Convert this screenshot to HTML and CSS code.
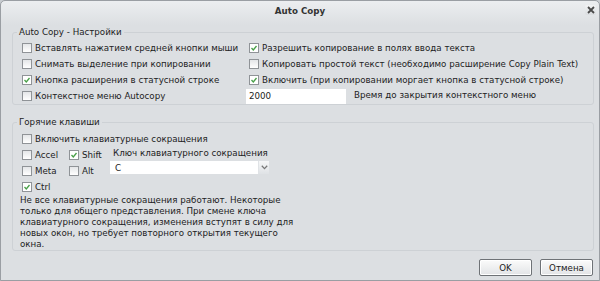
FILE: index.html
```html
<!DOCTYPE html>
<html lang="ru">
<head>
    <meta charset="UTF-8">
    <title>Auto Copy</title>
    <link rel="stylesheet" href="styles.css">
</head>
<body>
    <div class="dialog">
        <div class="titlebar">
            <span class="title">Auto Copy</span>
            <span class="close">
                <svg width="8" height="8" viewBox="0 0 8 8"><path d="M1 1L7 7M7 1L1 7" stroke="#4a4a4a" stroke-width="1.8"/></svg>
            </span>
        </div>

        <div class="group first">
            <div class="legend">Auto Copy - Настройки</div>
            <div class="settings">
                <label class="row"><span class="cb"></span>Вставлять нажатием средней кнопки мыши</label>
                <label class="row"><span class="cb checked"></span>Разрешить копирование в полях ввода текста</label>
                <label class="row"><span class="cb"></span>Снимать выделение при копировании</label>
                <label class="row"><span class="cb"></span>Копировать простой текст (необходимо расширение Copy Plain Text)</label>
                <label class="row"><span class="cb checked"></span>Кнопка расширения в статусной строке</label>
                <label class="row"><span class="cb checked"></span>Включить (при копировании моргает кнопка в статусной строке)</label>
                <label class="row"><span class="cb"></span>Контекстное меню Autocopy</label>
                <div class="row timeout">
                    <span class="input">2000</span>
                    <span class="hint">Время до закрытия контекстного меню</span>
                </div>
            </div>
        </div>

        <div class="group second">
            <div class="legend">Горячие клавиши</div>
            <div class="inner">
                <label class="row"><span class="cb"></span>Включить клавиатурные сокращения</label>
                <div class="keys">
                    <div class="mods">
                        <label class="row"><span class="cb"></span>Accel</label>
                        <label class="row"><span class="cb checked"></span>Shift</label>
                        <label class="row"><span class="cb"></span>Meta</label>
                        <label class="row"><span class="cb"></span>Alt</label>
                        <label class="row"><span class="cb checked"></span>Ctrl</label>
                    </div>
                    <div class="keybox">
                        <div class="keylabel">Ключ клавиатурного сокращения</div>
                        <div class="select">
                            <span>C</span>
                            <span class="arrow">
                                <svg width="7" height="5" viewBox="0 0 7 5"><path d="M0.8 0.8L3.5 3.6L6.2 0.8" fill="none" stroke="#777" stroke-width="1.3"/></svg>
                            </span>
                        </div>
                    </div>
                </div>
                <p class="note">Не все клавиатурные сокращения работают. Некоторые только для общего представления. При смене ключа клавиатурного сокращения, изменения вступят в силу для новых окон, но требует повторного открытия текущего окна.</p>
            </div>
        </div>

        <div class="buttons">
            <button class="btn">OK</button>
            <button class="btn">Отмена</button>
        </div>
    </div>
</body>
</html>
```

FILE: styles.css
```css
html, body {
    margin: 0;
    height: 100%;
}
body {
    font-family: "DejaVu Sans", Verdana, sans-serif;
    font-size: 8.7px;
    color: #222;
    background: #c8ccd0;
}
.dialog {
    box-sizing: border-box;
    height: 281px;
    border: 1px solid #9a9ea3;
    border-radius: 5px 5px 0 0;
    background: linear-gradient(#eceef0, #dcdfe2 24px);
    display: flex;
    flex-direction: column;
}
.titlebar {
    height: 20px;
    display: flex;
    align-items: center;
    justify-content: center;
    position: relative;
}
.title {
    font-weight: bold;
    color: #333;
}
.close {
    position: absolute;
    right: 3px;
    top: 4px;
    width: 11px;
    height: 10px;
    border-radius: 2px;
    background: linear-gradient(#f2f3f4, #dadde0);
    display: flex;
    align-items: center;
    justify-content: center;
}
.group {
    margin: 0 5px 0 11px;
    padding: 0 5px;
    border: 1px solid #cdd1d5;
    border-radius: 3px;
}
.legend {
    display: table;
    margin: -6px 0 0 -1px;
    padding: 0 2px;
    line-height: 11px;
    background: #dcdfe2;
}
.first {
    margin-top: 11px;
}
.second {
    margin-top: 17px;
}
.settings, .inner {
    margin-left: 4px;
}
.settings {
    margin-top: 2px;
    display: grid;
    grid-template-columns: 227px 1fr;
}
.inner {
    margin-top: 3px;
}
.row {
    display: flex;
    align-items: center;
    height: 16px;
    white-space: nowrap;
}
.cb {
    box-sizing: border-box;
    width: 10px;
    height: 10px;
    margin-right: 3px;
    border: 1px solid #8f9397;
    background: linear-gradient(#e4e6e8, #ffffff);
    flex: none;
}
.cb.checked {
    background: #fff url("data:image/svg+xml,%3Csvg xmlns='http://www.w3.org/2000/svg' width='8' height='8'%3E%3Cpath d='M1.5 4L3.3 6L6.5 2' fill='none' stroke='%2348a048' stroke-width='1.3'/%3E%3C/svg%3E") center no-repeat;
}
.timeout {
    margin-left: -3px;
}
.input {
    box-sizing: border-box;
    width: 100px;
    height: 15px;
    background: #fff;
    padding: 2px 3px;
    line-height: 11px;
}
.hint {
    margin-left: 8px;
    margin-top: -2px;
}
.keys {
    display: flex;
}
.mods {
    display: grid;
    grid-template-columns: 47px 41px;
}
.keylabel {
    height: 12px;
    line-height: 12px;
    padding-left: 3px;
}
.select {
    box-sizing: border-box;
    width: 159px;
    height: 13px;
    margin-top: 2px;
    padding-left: 5px;
    background: #fff;
    display: flex;
    align-items: center;
    justify-content: space-between;
}
.arrow {
    width: 10px;
    height: 13px;
    background: linear-gradient(#f6f7f8, #dfe2e5);
    border-left: 1px solid #e0e3e6;
    display: flex;
    align-items: center;
    justify-content: center;
}
.note {
    margin: 0 0 0 -2px;
    width: 278px;
    line-height: 11px;
}
.buttons {
    margin-top: auto;
    display: flex;
    justify-content: flex-end;
    gap: 8px;
    padding: 0 6px 4px 0;
}
.btn {
    width: 53px;
    height: 17px;
    font: inherit;
    color: #222;
    border: 1px solid #6e7276;
    border-radius: 2px;
    background: linear-gradient(#fbfbfb, #e2e4e6);
    box-shadow: inset 0 0 0 1px #fff;
    padding: 0;
}
```
